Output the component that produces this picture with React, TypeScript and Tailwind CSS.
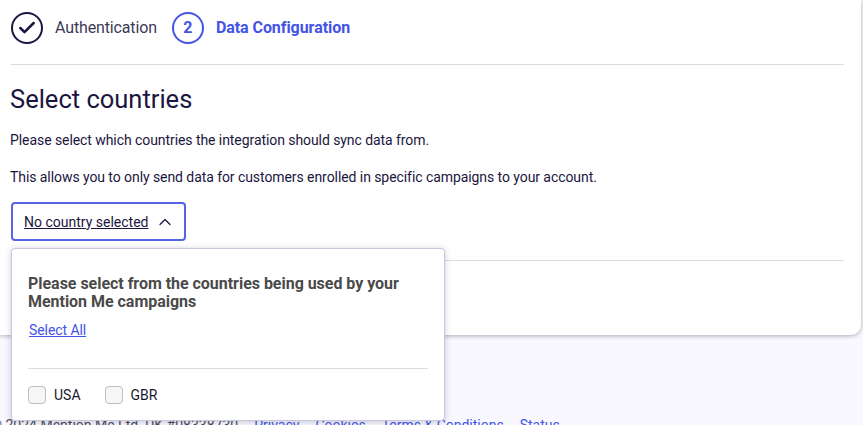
import { ChevronUp, Check } from "lucide-react";

function Footer() {
  return (
    <div className="flex items-center gap-4 text-sm leading-5 text-[#4b4b5c] whitespace-nowrap">
      <span>© 2024 Mention Me Ltd. UK #08338730</span>
      <a href="#" className="text-[#4353e6]">Privacy</a>
      <a href="#" className="text-[#4353e6]">Cookies</a>
      <a href="#" className="text-[#4353e6]">Terms &amp; Conditions</a>
      <a href="#" className="text-[#4353e6]">Status</a>
    </div>
  );
}

function CountryOption({ label }: { label: string }) {
  return (
    <label className="flex items-center gap-[8px]">
      <span className="h-[18px] w-[18px] rounded-[4px] border border-[#bdbdc2] bg-[#f6f6f6]" />
      <span className="text-sm leading-5 text-[#1a1a2e]">{label}</span>
    </label>
  );
}

export default function App() {
  return (
    <div className="h-[425px] w-[863px] overflow-hidden bg-[#f8f8fe] font-['Roboto',sans-serif] text-[#1b1640]">
      <div className="relative z-10 h-[335px] w-[861px] rounded-br-[10px] bg-white pl-[11px] pr-[17px] shadow-[0_1px_4px_rgba(60,60,90,0.4)]">
        <div className="flex h-[65px] items-start border-b border-[#dcdce0] pt-[12px]">
          <span className="flex h-8 w-8 items-center justify-center rounded-full border-2 border-[#1b1640]">
            <Check size={20} strokeWidth={3} />
          </span>
          <span className="ml-[12px] text-base leading-[32px] tracking-[-0.14px] text-[#3d3a55]">Authentication</span>
          <span className="ml-[15px] flex h-8 w-8 items-center justify-center rounded-full border-2 border-[#4353e6] text-base font-bold text-[#4353e6]">2</span>
          <span className="ml-[12px] text-base leading-[32px] font-bold tracking-[-0.06px] text-[#4353e6]">Data Configuration</span>
        </div>
        <h1 className="mt-[18px] -ml-px text-[25.5px] leading-[32px]">Select countries</h1>
        <p className="mt-[15px] -ml-px text-sm leading-5 tracking-[-0.07px]">Please select which countries the integration should sync data from.</p>
        <p className="mt-[17px] -ml-px text-sm leading-5 tracking-[-0.07px]">This allows you to only send data for customers enrolled in specific campaigns to your account.</p>
        <button type="button" className="mt-[15px] flex h-[39px] w-[175px] items-center gap-[7px] rounded-[4px] border-2 border-[#5664e4] pl-[11px] text-sm">
          <span className="underline">No country selected</span>
          <ChevronUp size={20} strokeWidth={1.5} />
        </button>
        <div className="mt-[19px] border-t border-[#dcdce0]" />

        <div className="absolute left-[11px] top-[248px] h-[173px] w-[434px] rounded-[4px] border border-[#c9c7e0] bg-white px-[16px] pt-[26px] shadow-[0_1px_6px_rgba(60,60,90,0.25)]">
          <h2 className="text-base leading-[18px] font-bold tracking-[-0.03px] text-[#4a4a4a]">Please select from the countries being used by your Mention Me campaigns</h2>
          <a href="#" className="mt-[9px] ml-px block w-fit text-sm leading-5 tracking-[-0.07px] text-[#4353e6] underline">Select All</a>
          <div className="mt-[28px] border-t border-[#dcdce0]" />
          <div className="mt-[16px] flex gap-[24px]">
            <CountryOption label="USA" />
            <CountryOption label="GBR" />
          </div>
        </div>
      </div>
      <div className="mt-[80px] -ml-[9px]">
        <Footer />
      </div>
    </div>
  );
}
